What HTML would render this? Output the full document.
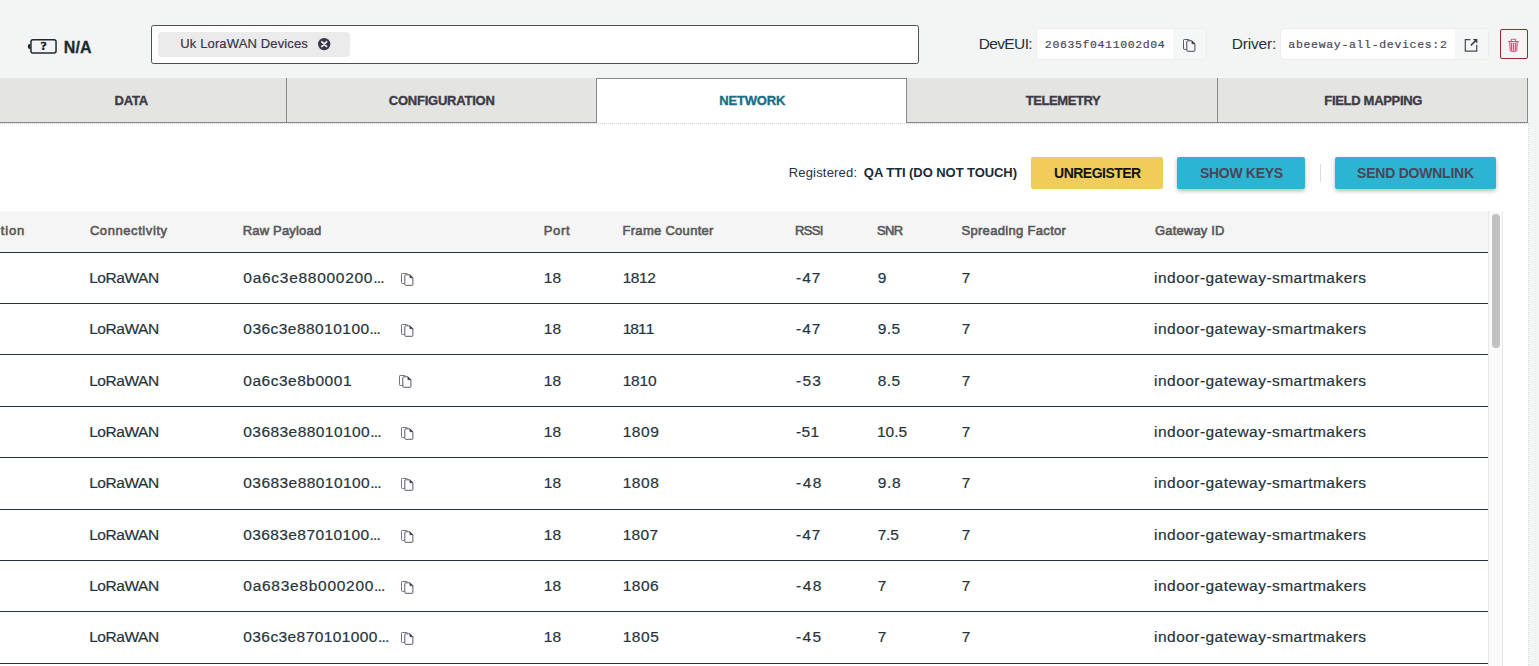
<!DOCTYPE html>
<html lang="en">
<head>
<meta charset="utf-8">
<title>Device Network</title>
<style>
*{box-sizing:border-box;margin:0;padding:0}
html,body{width:1539px;height:666px;overflow:hidden;background:#f3f5f5}
body{position:relative;font-family:"Liberation Sans",Arial,sans-serif;color:#263238}
.a{position:absolute;white-space:nowrap}

.x{position:absolute;white-space:nowrap;line-height:20px;height:20px}
.f-na{font-size:16px;font-weight:700;color:#1c2b31;-webkit-text-stroke:.3px #1c2b31}
.f-chip{font-size:13px;color:#3b3548;-webkit-text-stroke:.2px #3b3548}
.f-lbl{font-size:15.5px;color:#23323a}
.f-mono{font-family:"Liberation Mono","DejaVu Sans Mono",monospace;font-size:11.5px;color:#4b4657;-webkit-text-stroke:.2px #4b4657}
.f-tab{font-size:13px;font-weight:700;color:#3d3b45;-webkit-text-stroke:.35px #3d3b45}
.f-tab.on{color:#186e84;-webkit-text-stroke-color:#186e84}
.f-reg{font-size:13px;color:#263238}
.f-reg.b{font-weight:700;color:#1c2b31}
.f-btn{font-size:14px;font-weight:700;color:#4b4559}
.f-btn.k{color:#141414}
.f-th{font-size:13px;font-weight:400;color:#585858;-webkit-text-stroke:.6px #585858}
.f-td{font-size:15.5px;color:#25343b;-webkit-text-stroke:.2px #25343b}
.e{letter-spacing:-.8px}
.nk{font-kerning:none}

#tagbox{left:151px;top:25px;width:768px;height:39px;background:#fff;border:1px solid #4e4e4e;border-radius:2.5px}
#chip{left:158px;top:32px;width:192px;height:25px;background:#ebebeb;border-radius:4px}
.codebox{background:#fff;border-radius:5px;height:32px;top:28px;overflow:hidden;border:1px solid #ebeded}
.codebox .btn{position:absolute;right:0;top:0;bottom:0;width:33px;background:#f5f6f6}
#del{left:1500px;top:29px;width:28px;height:30px;border:1px solid #9a2828;border-radius:2px;background:#f3f5f5}
.tab{position:absolute;top:78px;height:45px;background:#e4e4e2;border-right:1px solid #888;border-bottom:1px solid #888}
.tab.on{background:#fff;border:0;border-top:1px solid #888;border-left:1px solid #888}
#panel{left:-30px;top:123px;width:1559px;height:560px;background:#fff;border:1px dotted #d0d0d0}
.b{position:absolute;top:157px;height:32px;border-radius:2px}
#b1{left:1031px;width:132px;background:#f0cc5a}
#b2{left:1177px;width:128px;background:#2bb5d3;box-shadow:0 2px 4px rgba(0,0,0,.28)}
#b3{left:1335px;width:161px;background:#2bb5d3;box-shadow:0 2px 4px rgba(0,0,0,.28)}
#thead{left:0;top:211px;width:1488px;height:42px;background:#f5f5f5;border-bottom:1px solid #22343c}
.row{position:absolute;left:0;width:1488px;height:1px;background:#22343c}
#track{left:1488px;top:211px;width:15px;height:460px;background:#fafafa;border-left:1px solid #e8e8e8;border-right:1px solid #e8e8e8}
#thumb{left:1492px;top:214px;width:8px;height:134px;background:#c1c1c1;border-radius:4px}
</style>
</head>
<body>
<!-- HEADER -->
<svg class="a" style="left:26px;top:37px" width="34" height="19" viewBox="26 37 34 19"><rect x="30.95" y="39.75" width="25.1" height="13.25" rx="2" fill="none" stroke="#1c2b31" stroke-width="1.5"/><path d="M30.400 43.800v5.400c-1.500 0-2.500-1-2.500-2.700s1-2.700 2.500-2.700z" fill="#1c2b31"/><text x="43.600" y="50.300" style="font-family:'Liberation Serif',serif;font-weight:700;font-size:12.5px" text-anchor="middle" fill="#10181c" stroke="#10181c" stroke-width=".45">?</text></svg>
<div class="a" id="tagbox"></div>
<div class="a" id="chip"></div>
<svg class="a" style="left:317px;top:37px" width="15" height="15" viewBox="317 37 15 15"><circle cx="324.200" cy="44.100" r="6.200" fill="#3b3348"/><path d="M321.900 41.800l4.600 4.600m0-4.600l-4.600 4.600" stroke="#ebebeb" stroke-width="1.900" stroke-linecap="round"/></svg>

<div class="a codebox" style="left:1036px;width:171px"><div class="btn"></div></div>
<div class="a codebox" style="left:1280px;width:209px"><div class="btn"></div></div>
<div class="a" id="del"></div>
<svg class="a" style="left:1182.80px;top:39.00px" width="14" height="14" viewBox="0 0 14 14"><path d="M3.600 10.400H1.200a.7.700 0 0 1-.7-.7V1.200a.7.700 0 0 1 .7-.7h4.500a.7.700 0 0 1 .7.700v.5" fill="none" stroke="#5a546b" stroke-width="1"/><path d="M4.500 1.800h4.400l3 3v6.800a.7.700 0 0 1-.7.700H4.500a.7.700 0 0 1-.7-.7V2.500a.7.700 0 0 1 .7-.7z" fill="#f5f6f6" stroke="#4d475d" stroke-width="1"/><path d="M8.900 1.800v3h3z" fill="#3d3650" stroke="#3d3650" stroke-width=".5" stroke-linejoin="round"/></svg>
<svg class="a" style="left:1462px;top:36px" width="20" height="20" viewBox="1462 36 20 20"><path d="M1470.400 39.600h-5.100v11.500h11.400v-6.400" fill="none" stroke="#4d475d" stroke-width="1.200"/><path d="M1470.900 45.400l5.400-5.400" fill="none" stroke="#3d3748" stroke-width="1.500"/><path d="M1472.800 39h4.500v4.500z" fill="#3d3748"/></svg>
<svg class="a" style="left:1505px;top:36px" width="18" height="18" viewBox="1505 36 18 18"><path d="M1511.200 41.200v-1.400a.6.600 0 0 1 .6-.6h3.300a.6.600 0 0 1 .6.600v1.400" fill="none" stroke="#d9537d" stroke-width="1.100"/><rect x="1508.100" y="41" width="10.700" height="1.200" fill="#d9537d"/><path d="M1509.700 42.200l.5 8.300a1 1 0 0 0 1 .9h4.600a1 1 0 0 0 1-.9l.5-8.300" fill="#f3c4d2" stroke="#d9537d" stroke-width="1"/><path d="M1511.500 43v7.600M1513.500 43v7.600M1515.500 43v7.600" stroke="#d9537d" stroke-width="1"/></svg>


<!-- TABS -->
<div class="a" id="panel"></div>
<div class="tab" style="left:-24px;width:311px"></div>
<div class="tab" style="left:287px;width:310px"></div>
<div class="tab on" style="left:596px;width:311px"></div>
<div class="tab" style="left:906px;width:312px;border-left:1px solid #888"></div>
<div class="tab" style="left:1218px;width:310px"></div>

<!-- ACTION ROW -->
<div class="b" id="b1"></div>
<div class="b" id="b2"></div>
<div class="a" style="left:1320px;top:164px;width:1px;height:18px;background:#dcdcdc"></div>
<div class="b" id="b3"></div>

<!-- TABLE -->
<div class="a" id="thead"></div>
<div class="a" id="track"></div>
<div class="a" id="thumb"></div>
<div class="row" style="top:303px"></div>
<div class="row" style="top:354px"></div>
<div class="row" style="top:406px"></div>
<div class="row" style="top:457px"></div>
<div class="row" style="top:509px"></div>
<div class="row" style="top:560px"></div>
<div class="row" style="top:611px"></div>
<div class="row" style="top:663px"></div>
<svg class="a" style="left:400.80px;top:273.00px" width="14" height="14" viewBox="0 0 14 14"><path d="M3.600 10.400H1.200a.7.700 0 0 1-.7-.7V1.200a.7.700 0 0 1 .7-.7h4.500a.7.700 0 0 1 .7.700v.5" fill="none" stroke="#777189" stroke-width="1"/><path d="M4.500 1.800h4.400l3 3v6.800a.7.700 0 0 1-.7.700H4.500a.7.700 0 0 1-.7-.7V2.500a.7.700 0 0 1 .7-.7z" fill="#fff" stroke="#5d576d" stroke-width="1"/><path d="M8.900 1.800v3h3z" fill="#3d3650" stroke="#3d3650" stroke-width=".5" stroke-linejoin="round"/></svg>
<svg class="a" style="left:400.80px;top:324.00px" width="14" height="14" viewBox="0 0 14 14"><path d="M3.600 10.400H1.200a.7.700 0 0 1-.7-.7V1.200a.7.700 0 0 1 .7-.7h4.500a.7.700 0 0 1 .7.700v.5" fill="none" stroke="#777189" stroke-width="1"/><path d="M4.500 1.800h4.400l3 3v6.800a.7.700 0 0 1-.7.700H4.500a.7.700 0 0 1-.7-.7V2.500a.7.700 0 0 1 .7-.7z" fill="#fff" stroke="#5d576d" stroke-width="1"/><path d="M8.900 1.800v3h3z" fill="#3d3650" stroke="#3d3650" stroke-width=".5" stroke-linejoin="round"/></svg>
<svg class="a" style="left:398.80px;top:375.00px" width="14" height="14" viewBox="0 0 14 14"><path d="M3.600 10.400H1.200a.7.700 0 0 1-.7-.7V1.200a.7.700 0 0 1 .7-.7h4.500a.7.700 0 0 1 .7.700v.5" fill="none" stroke="#777189" stroke-width="1"/><path d="M4.500 1.800h4.400l3 3v6.800a.7.700 0 0 1-.7.700H4.500a.7.700 0 0 1-.7-.7V2.500a.7.700 0 0 1 .7-.7z" fill="#fff" stroke="#5d576d" stroke-width="1"/><path d="M8.900 1.800v3h3z" fill="#3d3650" stroke="#3d3650" stroke-width=".5" stroke-linejoin="round"/></svg>
<svg class="a" style="left:400.80px;top:427.00px" width="14" height="14" viewBox="0 0 14 14"><path d="M3.600 10.400H1.200a.7.700 0 0 1-.7-.7V1.200a.7.700 0 0 1 .7-.7h4.500a.7.700 0 0 1 .7.700v.5" fill="none" stroke="#777189" stroke-width="1"/><path d="M4.500 1.800h4.400l3 3v6.800a.7.700 0 0 1-.7.700H4.500a.7.700 0 0 1-.7-.7V2.500a.7.700 0 0 1 .7-.7z" fill="#fff" stroke="#5d576d" stroke-width="1"/><path d="M8.900 1.800v3h3z" fill="#3d3650" stroke="#3d3650" stroke-width=".5" stroke-linejoin="round"/></svg>
<svg class="a" style="left:400.80px;top:478.00px" width="14" height="14" viewBox="0 0 14 14"><path d="M3.600 10.400H1.200a.7.700 0 0 1-.7-.7V1.200a.7.700 0 0 1 .7-.7h4.500a.7.700 0 0 1 .7.700v.5" fill="none" stroke="#777189" stroke-width="1"/><path d="M4.500 1.800h4.400l3 3v6.800a.7.700 0 0 1-.7.700H4.500a.7.700 0 0 1-.7-.7V2.500a.7.700 0 0 1 .7-.7z" fill="#fff" stroke="#5d576d" stroke-width="1"/><path d="M8.900 1.800v3h3z" fill="#3d3650" stroke="#3d3650" stroke-width=".5" stroke-linejoin="round"/></svg>
<svg class="a" style="left:400.80px;top:530.00px" width="14" height="14" viewBox="0 0 14 14"><path d="M3.600 10.400H1.200a.7.700 0 0 1-.7-.7V1.200a.7.700 0 0 1 .7-.7h4.500a.7.700 0 0 1 .7.700v.5" fill="none" stroke="#777189" stroke-width="1"/><path d="M4.500 1.800h4.400l3 3v6.800a.7.700 0 0 1-.7.700H4.500a.7.700 0 0 1-.7-.7V2.500a.7.700 0 0 1 .7-.7z" fill="#fff" stroke="#5d576d" stroke-width="1"/><path d="M8.900 1.800v3h3z" fill="#3d3650" stroke="#3d3650" stroke-width=".5" stroke-linejoin="round"/></svg>
<svg class="a" style="left:400.80px;top:581.00px" width="14" height="14" viewBox="0 0 14 14"><path d="M3.600 10.400H1.200a.7.700 0 0 1-.7-.7V1.200a.7.700 0 0 1 .7-.7h4.500a.7.700 0 0 1 .7.700v.5" fill="none" stroke="#777189" stroke-width="1"/><path d="M4.500 1.800h4.400l3 3v6.800a.7.700 0 0 1-.7.700H4.500a.7.700 0 0 1-.7-.7V2.500a.7.700 0 0 1 .7-.7z" fill="#fff" stroke="#5d576d" stroke-width="1"/><path d="M8.900 1.800v3h3z" fill="#3d3650" stroke="#3d3650" stroke-width=".5" stroke-linejoin="round"/></svg>
<svg class="a" style="left:400.80px;top:632.00px" width="14" height="14" viewBox="0 0 14 14"><path d="M3.600 10.400H1.200a.7.700 0 0 1-.7-.7V1.200a.7.700 0 0 1 .7-.7h4.500a.7.700 0 0 1 .7.700v.5" fill="none" stroke="#777189" stroke-width="1"/><path d="M4.500 1.800h4.400l3 3v6.800a.7.700 0 0 1-.7.700H4.500a.7.700 0 0 1-.7-.7V2.500a.7.700 0 0 1 .7-.7z" fill="#fff" stroke="#5d576d" stroke-width="1"/><path d="M8.900 1.800v3h3z" fill="#3d3650" stroke="#3d3650" stroke-width=".5" stroke-linejoin="round"/></svg>
<div class="x f-na" style="left:63.84px;top:38px;letter-spacing:0.09px">N/A</div>
<div class="x f-chip" style="left:180.23px;top:34px;letter-spacing:0.14px">Uk LoraWAN Devices</div>
<div class="x f-lbl" style="left:978.69px;top:34px;letter-spacing:-0.63px">DevEUI:</div>
<div class="x f-lbl" style="left:1231.65px;top:34px;letter-spacing:-0.17px">Driver:</div>
<div class="x f-mono" style="left:1044.87px;top:35px;letter-spacing:0.63px">20635f0411002d04</div>
<div class="x f-mono" style="left:1288.32px;top:35px;letter-spacing:0.68px">abeeway-all-devices:2</div>
<div class="x f-tab" style="left:114.41px;top:91px;letter-spacing:-0.11px">DATA</div>
<div class="x f-tab" style="left:388.78px;top:91px;letter-spacing:-0.23px">CONFIGURATION</div>
<div class="x f-tab on" style="left:719.28px;top:91px;letter-spacing:-0.19px">NETWORK</div>
<div class="x f-tab" style="left:1025.67px;top:91px;letter-spacing:-0.40px">TELEMETRY</div>
<div class="x f-tab" style="left:1324.25px;top:91px;letter-spacing:-0.30px">FIELD MAPPING</div>
<div class="x f-reg" style="left:788.67px;top:163px;letter-spacing:0.19px">Registered:</div>
<div class="x f-reg b" style="left:863.87px;top:163px;letter-spacing:-0.07px">QA TTI (DO NOT TOUCH)</div>
<div class="x f-btn k" style="left:1054.05px;top:163px;letter-spacing:-0.52px">UNREGISTER</div>
<div class="x f-btn" style="left:1199.97px;top:163px;letter-spacing:-0.31px">SHOW KEYS</div>
<div class="x f-btn" style="left:1357.04px;top:163px;letter-spacing:-0.23px">SEND DOWNLINK</div>
<div class="x f-th" style="left:0.73px;top:221px;letter-spacing:0.83px">tion</div>
<div class="x f-th" style="left:89.90px;top:221px;letter-spacing:0.58px">Connectivity</div>
<div class="x f-th" style="left:242.65px;top:221px;letter-spacing:0.19px">Raw Payload</div>
<div class="x f-th" style="left:543.76px;top:221px;letter-spacing:0.70px">Port</div>
<div class="x f-th" style="left:622.53px;top:221px;letter-spacing:0.29px">Frame Counter</div>
<div class="x f-th" style="left:794.93px;top:221px;letter-spacing:-0.62px">RSSI</div>
<div class="x f-th" style="left:876.98px;top:221px;letter-spacing:-0.63px">SNR</div>
<div class="x f-th" style="left:961.43px;top:221px;letter-spacing:0.32px">Spreading Factor</div>
<div class="x f-th" style="left:1155.01px;top:221px;letter-spacing:0.17px">Gateway ID</div>
<div class="x f-td" style="left:89.14px;top:268px;letter-spacing:-0.44px">LoRaWAN</div>
<div class="x f-td" style="left:243.32px;top:268px;letter-spacing:0.72px">0a6c3e88000200<span class="e">...</span></div>
<div class="x f-td" style="left:543.64px;top:268px;letter-spacing:0.26px">18</div>
<div class="x f-td nk" style="left:622.64px;top:268px;letter-spacing:-0.43px">1812</div>
<div class="x f-td" style="left:796.09px;top:268px;letter-spacing:0.91px">-47</div>
<div class="x f-td" style="left:877.63px;top:268px;letter-spacing:0.00px">9</div>
<div class="x f-td" style="left:961.85px;top:268px;letter-spacing:0.00px">7</div>
<div class="x f-td" style="left:1154.11px;top:268px;letter-spacing:0.45px">indoor-gateway-smartmakers</div>
<div class="x f-td" style="left:89.14px;top:319px;letter-spacing:-0.44px">LoRaWAN</div>
<div class="x f-td" style="left:243.32px;top:319px;letter-spacing:0.46px">036c3e88010100<span class="e">...</span></div>
<div class="x f-td" style="left:543.64px;top:319px;letter-spacing:0.26px">18</div>
<div class="x f-td nk" style="left:622.64px;top:319px;letter-spacing:-0.92px">1811</div>
<div class="x f-td" style="left:796.09px;top:319px;letter-spacing:0.91px">-47</div>
<div class="x f-td" style="left:877.63px;top:319px;letter-spacing:0.52px">9.5</div>
<div class="x f-td" style="left:961.85px;top:319px;letter-spacing:0.00px">7</div>
<div class="x f-td" style="left:1154.11px;top:319px;letter-spacing:0.45px">indoor-gateway-smartmakers</div>
<div class="x f-td" style="left:89.14px;top:371px;letter-spacing:-0.44px">LoRaWAN</div>
<div class="x f-td" style="left:243.32px;top:371px;letter-spacing:0.51px">0a6c3e8b0001</div>
<div class="x f-td" style="left:543.64px;top:371px;letter-spacing:0.26px">18</div>
<div class="x f-td nk" style="left:622.64px;top:371px;letter-spacing:-0.17px">1810</div>
<div class="x f-td" style="left:796.09px;top:371px;letter-spacing:1.21px">-53</div>
<div class="x f-td" style="left:877.72px;top:371px;letter-spacing:0.47px">8.5</div>
<div class="x f-td" style="left:961.85px;top:371px;letter-spacing:0.00px">7</div>
<div class="x f-td" style="left:1154.11px;top:371px;letter-spacing:0.45px">indoor-gateway-smartmakers</div>
<div class="x f-td" style="left:89.14px;top:422px;letter-spacing:-0.44px">LoRaWAN</div>
<div class="x f-td" style="left:243.32px;top:422px;letter-spacing:0.44px">03683e88010100<span class="e">...</span></div>
<div class="x f-td" style="left:543.64px;top:422px;letter-spacing:0.26px">18</div>
<div class="x f-td nk" style="left:622.64px;top:422px;letter-spacing:0.57px">1809</div>
<div class="x f-td" style="left:796.09px;top:422px;letter-spacing:0.27px">-51</div>
<div class="x f-td" style="left:876.95px;top:422px;letter-spacing:0.00px">10.5</div>
<div class="x f-td" style="left:961.85px;top:422px;letter-spacing:0.00px">7</div>
<div class="x f-td" style="left:1154.11px;top:422px;letter-spacing:0.45px">indoor-gateway-smartmakers</div>
<div class="x f-td" style="left:89.14px;top:473px;letter-spacing:-0.44px">LoRaWAN</div>
<div class="x f-td" style="left:243.32px;top:473px;letter-spacing:0.44px">03683e88010100<span class="e">...</span></div>
<div class="x f-td" style="left:543.64px;top:473px;letter-spacing:0.26px">18</div>
<div class="x f-td nk" style="left:622.64px;top:473px;letter-spacing:0.55px">1808</div>
<div class="x f-td" style="left:796.09px;top:473px;letter-spacing:1.45px">-48</div>
<div class="x f-td" style="left:877.63px;top:473px;letter-spacing:0.77px">9.8</div>
<div class="x f-td" style="left:961.85px;top:473px;letter-spacing:0.00px">7</div>
<div class="x f-td" style="left:1154.11px;top:473px;letter-spacing:0.45px">indoor-gateway-smartmakers</div>
<div class="x f-td" style="left:89.14px;top:525px;letter-spacing:-0.44px">LoRaWAN</div>
<div class="x f-td" style="left:243.32px;top:525px;letter-spacing:0.39px">03683e87010100<span class="e">...</span></div>
<div class="x f-td" style="left:543.64px;top:525px;letter-spacing:0.26px">18</div>
<div class="x f-td nk" style="left:622.64px;top:525px;letter-spacing:0.30px">1807</div>
<div class="x f-td" style="left:796.09px;top:525px;letter-spacing:0.91px">-47</div>
<div class="x f-td" style="left:877.74px;top:525px;letter-spacing:-0.24px">7.5</div>
<div class="x f-td" style="left:961.85px;top:525px;letter-spacing:0.00px">7</div>
<div class="x f-td" style="left:1154.11px;top:525px;letter-spacing:0.45px">indoor-gateway-smartmakers</div>
<div class="x f-td" style="left:89.14px;top:576px;letter-spacing:-0.44px">LoRaWAN</div>
<div class="x f-td" style="left:243.32px;top:576px;letter-spacing:0.72px">0a683e8b000200<span class="e">...</span></div>
<div class="x f-td" style="left:543.64px;top:576px;letter-spacing:0.26px">18</div>
<div class="x f-td nk" style="left:622.64px;top:576px;letter-spacing:0.53px">1806</div>
<div class="x f-td" style="left:796.09px;top:576px;letter-spacing:1.45px">-48</div>
<div class="x f-td" style="left:877.74px;top:576px;letter-spacing:0.00px">7</div>
<div class="x f-td" style="left:961.85px;top:576px;letter-spacing:0.00px">7</div>
<div class="x f-td" style="left:1154.11px;top:576px;letter-spacing:0.45px">indoor-gateway-smartmakers</div>
<div class="x f-td" style="left:89.14px;top:627px;letter-spacing:-0.44px">LoRaWAN</div>
<div class="x f-td" style="left:243.32px;top:627px;letter-spacing:0.41px">036c3e870101000<span class="e">...</span></div>
<div class="x f-td" style="left:543.64px;top:627px;letter-spacing:0.26px">18</div>
<div class="x f-td nk" style="left:622.64px;top:627px;letter-spacing:0.55px">1805</div>
<div class="x f-td" style="left:796.09px;top:627px;letter-spacing:1.28px">-45</div>
<div class="x f-td" style="left:877.74px;top:627px;letter-spacing:0.00px">7</div>
<div class="x f-td" style="left:961.85px;top:627px;letter-spacing:0.00px">7</div>
<div class="x f-td" style="left:1154.11px;top:627px;letter-spacing:0.45px">indoor-gateway-smartmakers</div>
</body>
</html>
